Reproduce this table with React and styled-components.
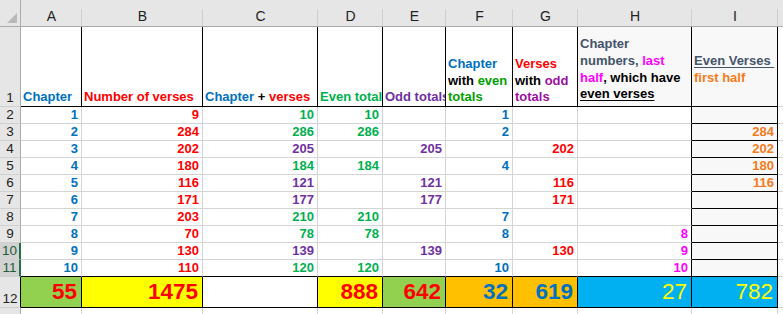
import styled, { createGlobalStyle } from "styled-components";

const BLUE = "#0070c0";
const RED = "#ff0000";
const GREEN = "#00b050";
const DEEP_GREEN = "#00a000";
const PURPLE = "#7030a0";
const PLUM = "#9b10a0";
const MAGENTA = "#ff00ff";
const ORANGE = "#f47b20";
const SLATE = "#44546a";
const GRID = "#d4d4d4";
const INK = "#000000";

const GlobalStyle = createGlobalStyle`
  html, body {
    margin: 0;
    padding: 0;
    background: #ffffff;
  }
  body {
    font-family: "Liberation Sans", Arial, sans-serif;
  }
`;

const columns = [
  { key: "A", w: 61 },
  { key: "B", w: 121 },
  { key: "C", w: 115 },
  { key: "D", w: 65 },
  { key: "E", w: 63 },
  { key: "F", w: 67 },
  { key: "G", w: 65 },
  { key: "H", w: 114 },
  { key: "I", w: 86 },
  { key: "", w: 60 },
];

const verses = [9, 284, 202, 180, 116, 171, 203, 70, 130, 110];

// build rows 2-11 from the verse counts
const body = verses.map((v, i) => {
  const ch = i + 1;
  const sum = ch + v;
  const even = sum % 2 === 0;
  return {
    n: ch + 1,
    cells: [
      { t: ch, c: BLUE },
      { t: v, c: RED },
      { t: sum, c: even ? GREEN : PURPLE },
      { t: even ? sum : "", c: GREEN },
      { t: even ? "" : sum, c: PURPLE },
      { t: even ? ch : "", c: BLUE },
      { t: even ? "" : v, c: RED },
      { t: ch > 5 && v % 2 === 0 ? ch : "", c: MAGENTA },
      { t: ch <= 5 && v % 2 === 0 ? v : "", c: ORANGE },
    ],
  };
});

const totals = [
  { t: 55, c: RED, bg: "#92d050" },
  { t: 1475, c: RED, bg: "#ffff00" },
  { t: "", c: RED, bg: "#ffffff" },
  { t: 888, c: RED, bg: "#ffff00" },
  { t: 642, c: RED, bg: "#92d050" },
  { t: 32, c: BLUE, bg: "#ffc000" },
  { t: 619, c: BLUE, bg: "#ffc000" },
  { t: 27, c: "#ffff00", bg: "#00b0f0", thin: true },
  { t: 782, c: "#ffff00", bg: "#00b0f0", thin: true },
];

const App = () => {
  return (
    <>
      <GlobalStyle />
      <Window>
        <Sheet $cols={columns.map((c) => c.w + "px").join(" ")}>
          <Corner />
          {columns.map((c, i) => (
            <ColHead key={"h" + i}>{c.key}</ColHead>
          ))}

          <RowHead>1</RowHead>
          <HeadCell $rb={INK} $bb={INK}>
            <Line><Tx $c={BLUE}>Chapter</Tx></Line>
          </HeadCell>
          <HeadCell $rb={INK} $bb={INK}>
            <Line><Tx $c={RED}>Number of verses</Tx></Line>
          </HeadCell>
          <HeadCell $rb={INK} $bb={INK}>
            <Line>
              <Tx $c={BLUE}>Chapter</Tx> <Tx $c={INK}>+</Tx>{" "}
              <Tx $c={RED}>verses</Tx>
            </Line>
          </HeadCell>
          <HeadCell $rb={INK} $bb={INK}>
            <Line><Tx $c={GREEN}>Even totals</Tx></Line>
          </HeadCell>
          <HeadCell $rb={INK} $bb={INK}>
            <Line><Tx $c={PURPLE}>Odd totals</Tx></Line>
          </HeadCell>
          <HeadCell $rb={INK} $bb={INK}>
            <Line><Tx $c={BLUE}>Chapter</Tx></Line>
            <Line>
              <Tx $c={INK}>with</Tx> <Tx $c={DEEP_GREEN}>even</Tx>
            </Line>
            <Line><Tx $c={DEEP_GREEN}>totals</Tx></Line>
          </HeadCell>
          <HeadCell $rb={INK} $bb={INK}>
            <Line><Tx $c={RED}>Verses</Tx></Line>
            <Line>
              <Tx $c={INK}>with</Tx> <Tx $c={PLUM}>odd</Tx>
            </Line>
            <Line><Tx $c={PLUM}>totals</Tx></Line>
          </HeadCell>
          <HeadCell $rb={INK} $bb={INK} $mid $bg="#f8f8f8">
            <Line><Tx $c={SLATE}>Chapter</Tx></Line>
            <Line>
              <Tx $c={SLATE}>numbers,</Tx> <Tx $c={MAGENTA}>last</Tx>
            </Line>
            <Line>
              <Tx $c={MAGENTA}>half</Tx>
              <Tx $c={INK}>, which have</Tx>
            </Line>
            <Line><Tx $c={INK} $u>even verses</Tx></Line>
          </HeadCell>
          <HeadCell $rb={INK} $bb={INK} $mid $bg="#f8f8f8">
            <Line><Tx $c={SLATE} $u>Even Verses&nbsp;</Tx></Line>
            <Line><Tx $c={ORANGE}>first half</Tx></Line>
          </HeadCell>
          <HeadCell />

          {body.map((row, r) => {
            const last = r === body.length - 1;
            return [
              <RowHead key={"r" + row.n} $sel={row.n >= 10}>
                {row.n}
              </RowHead>,
              ...row.cells.map((cell, i) => (
                <Cell
                  key={row.n + "-" + i}
                  $c={cell.c}
                  $rb={i >= 7 ? INK : GRID}
                  $bb={last || i === 8 ? INK : GRID}
                  $bg={i === 8 ? "#f8f8f8" : "#ffffff"}
                >
                  {cell.t}
                </Cell>
              )),
              <Cell key={"j" + row.n} />,
            ];
          })}

          <RowHead $edge>12</RowHead>
          {totals.map((cell, i) => (
            <Total
              key={"t" + i}
              $c={cell.c}
              $bg={cell.bg}
              $thin={cell.thin}
            >
              {cell.t}
            </Total>
          ))}
          <Cell />

          <RowHead />
          {columns.map((c, i) => (
            <Cell key={"e" + i} />
          ))}
        </Sheet>
      </Window>
    </>
  );
};

const Window = styled.div`
  width: 783px;
  height: 314px;
  overflow: hidden;
  background: #ffffff;
`;

const Sheet = styled.div`
  display: grid;
  grid-template-columns: 21px ${(p) => p.$cols};
  grid-template-rows: 27px 80px repeat(10, 17px) 31px 20px;
  width: max-content;
`;

const Corner = styled.div`
  position: relative;
  background: #e6e6e6;
  border-right: 1px solid #ababab;
  border-bottom: 1px solid #ababab;

  &::after {
    content: "";
    position: absolute;
    right: 3px;
    bottom: 3px;
    width: 0;
    height: 0;
    border-left: 10px solid transparent;
    border-bottom: 10px solid #b9b9b9;
  }
`;

const ColHead = styled.div`
  position: relative;
  display: flex;
  align-items: flex-end;
  justify-content: center;
  padding-bottom: 3px;
  background: #e6e6e6;
  border-bottom: 1px solid #ababab;
  color: #222;
  font-size: 14px;
  line-height: 14px;

  &::after {
    content: "";
    position: absolute;
    right: 0;
    top: 9px;
    bottom: 0;
    width: 1px;
    background: #cfcfcf;
  }
`;

const RowHead = styled.div`
  display: flex;
  align-items: flex-end;
  justify-content: center;
  background: ${(p) => (p.$sel ? "#d2d2d2" : "#e6e6e6")};
  color: ${(p) => (p.$sel ? "#1f5c38" : "#222")};
  border-bottom: 1px solid #d0d0d0;
  border-right: ${(p) =>
    p.$sel ? "2px solid #217346" : p.$edge ? "1px solid #000" : "1px solid #ababab"};
  font-size: 13.5px;
  line-height: 15px;
  padding-bottom: 1px;
`;

const HeadCell = styled.div`
  display: flex;
  flex-direction: column;
  justify-content: ${(p) => (p.$mid ? "center" : "flex-end")};
  padding: ${(p) => (p.$mid ? "6px 2px 0 2px" : "0 2px 0 2px")};
  overflow: hidden;
  white-space: nowrap;
  background: ${(p) => p.$bg || "#ffffff"};
  border-right: 1px solid ${(p) => p.$rb || GRID};
  border-bottom: 1px solid ${(p) => p.$bb || GRID};
  font-size: 13px;
  font-weight: bold;
`;

const Line = styled.div`
  line-height: 16.6px;
`;

const Tx = styled.span`
  color: ${(p) => p.$c};
  text-decoration: ${(p) => (p.$u ? "underline" : "none")};
  text-underline-offset: 2px;
`;

const Cell = styled.div`
  display: flex;
  align-items: flex-end;
  justify-content: flex-end;
  padding: 0 3px 0 2px;
  overflow: hidden;
  background: ${(p) => p.$bg || "#ffffff"};
  color: ${(p) => p.$c || INK};
  border-right: 1px solid ${(p) => p.$rb || GRID};
  border-bottom: 1px solid ${(p) => p.$bb || GRID};
  font-size: 13px;
  font-weight: bold;
  line-height: 16px;
`;

const Total = styled.div`
  display: flex;
  align-items: flex-end;
  justify-content: flex-end;
  padding: 0 4px 1px 2px;
  background: ${(p) => p.$bg};
  color: ${(p) => p.$c};
  border-right: 1px solid ${INK};
  border-bottom: 1px solid ${INK};
  font-size: 22.5px;
  font-weight: ${(p) => (p.$thin ? "normal" : "bold")};
  line-height: 28px;
`;

export default App;
